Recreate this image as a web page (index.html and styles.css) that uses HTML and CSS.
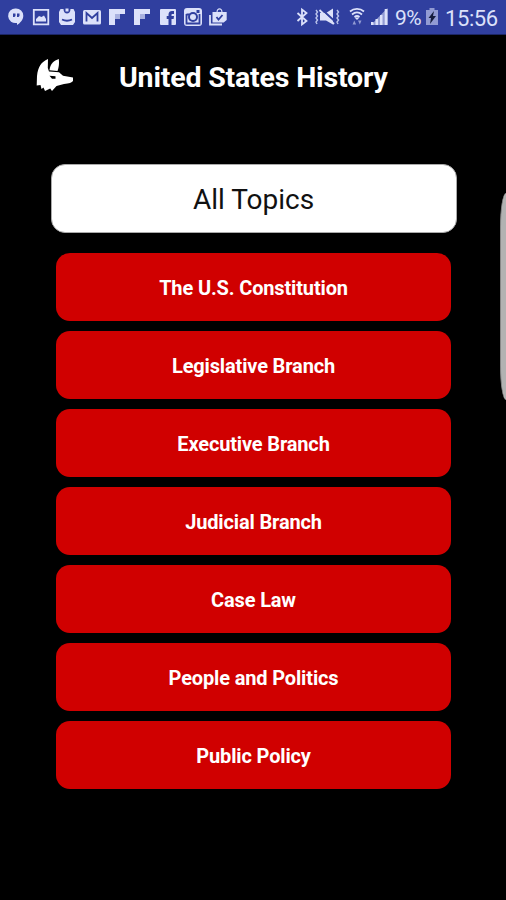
FILE: index.html
```html
<!DOCTYPE html>
<html lang="en">
<head>
<meta charset="utf-8">
<title>United States History</title>
<link rel="stylesheet" href="styles.css">
</head>
<body>
<div class="status">
  <div class="notifications">
    <svg viewBox="0 0 20 20"><path d="M10 1.500a7.300 7.300 0 0 1 7.300 7.200c0 4-3.300 7.500-6.300 9.300v-2.100A7.300 7.300 0 1 1 10 1.500z"/><path class="cut" d="M7 6.500h2.500v2.500L8.500 10H7zM11 6.500h2.500v2.500l-1 1H11z"/></svg>
    <svg viewBox="0 0 20 20"><path class="line" d="M2.800 2.800h14.500v14.500H2.800z"/><path d="M5 14.500V12l3-3 2.500 1L13 8.500l2 3.500v2.500z"/></svg>
    <svg viewBox="0 0 20 20"><path d="M3.500 2h3c0 6 7 6 7 0h3l1.500 3v10l-2 3H4l-2-3V5z"/><path d="M8.500 1.500h3v3h-3z"/><path class="cutline" d="M5 12.500c3 1.500 7 1.500 10 0"/></svg>
    <svg viewBox="0 0 20 20"><rect x="1" y="3" width="18" height="14.500" rx="1.500"/><path class="cutline" d="M4.500 14.500V6l5.500 5 5.500-5v8.500"/></svg>
    <svg viewBox="0 0 20 20"><path d="M2 2h16v5h-5v5H8v6H2z"/><path class="shade" d="M8 7h5v5H8z"/></svg>
    <svg viewBox="0 0 20 20"><path d="M2 2h16v5h-5v5H8v6H2z"/><path class="shade" d="M8 7h5v5H8z"/></svg>
    <svg viewBox="0 0 20 20"><rect x="2" y="2" width="16" height="16" rx="1"/><path class="cut" d="M10.500 18v-6H8.700V9h1.800V7.500C10.500 5 12 4 14 4h2v3h-1.500c-.8 0-1 .3-1 1v1H16l-.4 3h-2.100v6z"/></svg>
    <svg viewBox="0 0 20 20"><rect x="1" y="1" width="18" height="18" rx="3"/><path class="cutline" d="M3.500 7.500h3M3.500 7v9.500h13V7"/><circle class="cut" cx="10" cy="10" r="5"/><circle cx="10" cy="10" r="3"/><path class="cut" d="M13.500 3h3v3h-3z"/></svg>
    <svg viewBox="0 0 20 20"><path class="line" d="M2 8v9.500h12"/><path d="M4.500 5h4c0-5 6-5 6 0h4.200v8l-3 2.500H4.500z"/><path class="cutline" d="M8.500 10l2 2.500 4-4.500M10.500 5c0-2 2-2 2 0"/></svg>
  </div>
  <div class="system">
    <svg class="bluetooth" viewBox="0 0 12 20"><path class="line" d="M1.500 6l9 8L6 17.500V2.500L10.500 6l-9 8"/></svg>
    <svg class="mute" viewBox="0 0 26 20"><path d="M6 6h6l7-4.500v16L12 13.500H6z"/><path class="cutline" d="M8.500 3l12 11"/><path class="line" d="M5.500 3l14.500 14"/><path class="thin" d="M2 3l1.500 2L2 7l1.500 2L2 11l1.500 2L2 15l1 2M23 3l1.500 2L23 7l1.500 2-1.500 2 1.500 2-1.500 2 1 2"/></svg>
    <svg class="wifi" viewBox="0 0 16 20"><path class="line" d="M1 4.500c4-3.500 10-3.500 14 0M3 7.500c3-2.500 7-2.500 10 0M5.500 10c1.500-1.200 3.500-1.200 5 0"/><path d="M5.500 10.500h5L8 13z"/><path class="dim" d="M3.500 17.500l1.800-4 1.800 4zM9 13.500h3.500l-1.700 4z"/></svg>
    <svg class="signal" viewBox="0 0 18 20"><path class="dim" d="M1 18L17.500 1v17z"/><path d="M1 15h2.500v3H1zM5.500 12H8v6H5.500zM10 8h2.500v10H10zM14.700 2h2.800v16h-2.800z"/></svg>
    <span class="percent">9%</span>
    <svg class="battery" viewBox="0 0 12 20"><path class="dim" d="M3.500 1h5v2H12v15H0V3h3.500z"/><path class="bolt" d="M8 4L2.500 11H5l-1 6 6-8H7z"/></svg>
    <span class="clock">15:56</span>
  </div>
</div>
<header class="header">
  <svg class="fox" viewBox="0 0 38 34"><path d="M.7 26.500L1 17C2 8 5 3 12 0L11.800 9 13 12.500 23 13.300 27 16.800 37 18.500V22c-1 1.500-4 2.500-9 3l-7.500 2-4.500 5-1.800-2.500L9 32l-1.500-3.500L5.500 30l-1-4z"/><path d="M13.500 11.200C14 5 18 1.500 22.800 0c.5 4 .2 8-1.300 12z"/><path class="eye" d="M13.500 16.800l6 .5v2.400h-3.500z"/></svg>
  <h1>United States History</h1>
</header>
<main class="topics">
  <button class="all">All Topics</button>
  <button class="topic">The U.S. Constitution</button>
  <button class="topic">Legislative Branch</button>
  <button class="topic">Executive Branch</button>
  <button class="topic">Judicial Branch</button>
  <button class="topic">Case Law</button>
  <button class="topic">People and Politics</button>
  <button class="topic">Public Policy</button>
</main>
<div class="edge"></div>
</body>
</html>
```
FILE: styles.css
```css
* { box-sizing: border-box; }
body {
  margin: 0;
  width: 506px;
  height: 900px;
  overflow: hidden;
  background: #000;
  color: #fff;
  font-family: Roboto, sans-serif;
  position: relative;
}
.status {
  height: 35px;
  background: #303f9f;
  border-bottom: 1px solid #1c2665;
  display: flex;
  justify-content: space-between;
  padding: 7px 8px 0 6px;
  color: #dce1fa;
}
svg { display: block; fill: #dce1fa; flex: none; }
.notifications { display: flex; gap: 5.3px; }
.notifications svg { width: 20px; height: 20px; }
.line { fill: none; stroke: #dce1fa; stroke-width: 1.8; }
.thin { fill: none; stroke: #bdc5ec; stroke-width: 1.4; }
.cut { fill: #303f9f; }
.cutline { fill: none; stroke: #303f9f; stroke-width: 1.8; }
.shade { fill: #a9b1df; }
.dim { fill: #929bd3; }
.bolt { fill: #161d3d; }
.system { display: flex; }
.system svg { height: 20px; }
.bluetooth { width: 12px; }
.mute { width: 26px; margin-left: 6px; }
.wifi { width: 16px; margin-left: 9px; }
.signal { width: 18px; margin-left: 5px; }
.percent { font-size: 21px; line-height: 23px; width: 28px; margin-left: 7px; letter-spacing: -.5px; }
.battery { width: 12px; margin-left: 3px; }
.clock { font-size: 22px; line-height: 23px; width: 53px; margin-left: 7px; white-space: nowrap; letter-spacing: -.4px; }
.header { height: 129px; padding: 24px 0 0 36px; display: flex; }
.fox { width: 38px; height: 34px; fill: #fff; }
.fox .eye { fill: #000; }
h1 {
  margin: 0 0 0 45px;
  font-size: 28.500px;
  line-height: 37px;
  height: 37px;
  font-weight: 700;
  letter-spacing: -.18px;
  white-space: nowrap;
}
.topics { display: flex; flex-direction: column; align-items: center; gap: 10.100px; padding-left: 1px; }
button { border: 0; padding: 0; font-family: inherit; white-space: nowrap; }
.all {
  width: 406px;
  height: 69px;
  border-radius: 14px;
  border: 1px solid #aaa;
  background: #fff;
  color: #111;
  font-size: 28px;
  font-weight: 400;
  padding-top: 2px;
  margin-bottom: 9.500px;
}
.topic {
  width: 395px;
  height: 68px;
  border-radius: 14px;
  background: #d00000;
  color: #fff;
  font-size: 20px;
  font-weight: 700;
  letter-spacing: -.15px;
  padding-top: 2px;
}
.edge {
  position: absolute;
  right: 0;
  top: 193px;
  width: 6px;
  height: 207px;
  background: #b2b2b2;
  border-left: 1px solid #888;
  border-radius: 6px 0 0 6px / 35px 0 0 35px;
}
```
